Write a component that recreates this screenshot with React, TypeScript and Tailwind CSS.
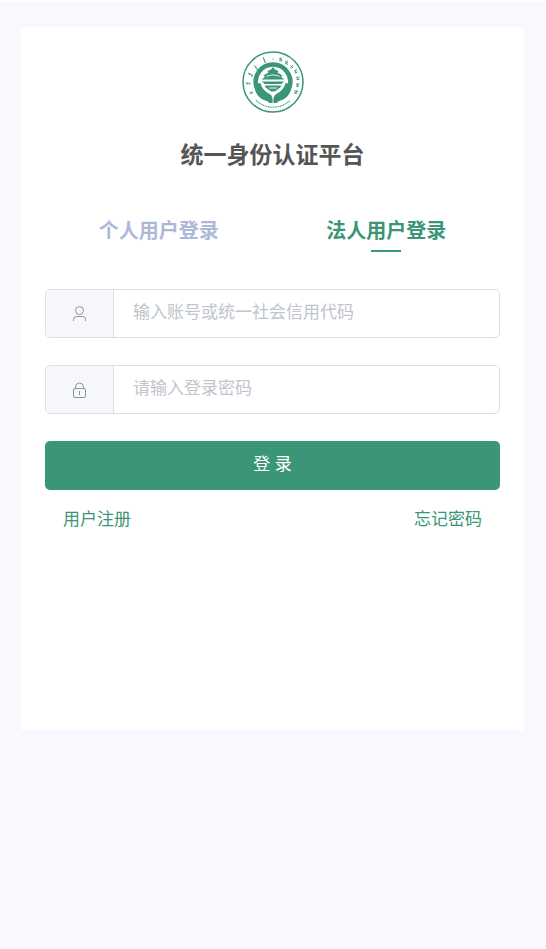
import { FormEvent, useState } from "react";

const TABS = ["个人用户登录", "法人用户登录"];

function Logo() {
  return (
    <svg
      viewBox="0 0 62 62"
      className="size-[62px]"
      fill="none"
      stroke="#3a9676"
      role="img"
      aria-label="logo"
    >
      <circle cx="31" cy="31" r="30" strokeWidth="1.5" />

      {/* script on the left side of the ring */}
      <path
        d="M7.500 42.500l3.500-1.500M8.500 40.500l1.500 2.500M3.500 32l5 .5M5 31.500l.5 2M7.500 32v1.500M6 22l5 3M8 22l-.5 2M10 23.500l-.5 2M12 14l4 5M13 17l1.500-1M14.500 19l1.500-1M21 6l2.500 6M21.500 9l1.500-.5M22.500 11l1.500-.5"
        strokeWidth=".9"
      />

      {/* characters on the right side of the ring */}
      <path
        d="M30.500 8h1.200M37 7.500l3 1M38.800 6.500l-1 4M39.800 8.500l-.5 2M43 10l3 2M45.500 9.500l-2.500 4M44 12.500l2 1M48.500 14.500l2.500 2.500M51 14l-3 3.500M52 20l3-1.500M52.500 22l3-1M53 19.500l1.500 2.500M54 26.500l3.500-.5M54.500 28.500h3M56 26v2.500M54 33h3.500M54 35h3M55.500 33v3M52.500 39.500l4 1M52 41.500l3.500 1M54.500 39.500l-1 3.500"
        strokeWidth=".9"
      />
      <path
        d="M14 49.500a25 25 0 0 0 34 0"
        strokeWidth="1.2"
        strokeDasharray="1 .7"
      />

      {/* arch over the hall */}
      <path
        d="M14.500 36a17.300 17.300 0 1 1 33 0"
        strokeWidth="4.500"
      />

      <g fill="#3a9676" stroke="none">
        {/* hall */}
        <path d="M31 16l2 2.500 3.500 1.500-1 1.500 5 3-1.500 1.500 3.500 2.500H19.500l3.500-2.500-1.500-1.500 5-3-1-1.500 3.500-1.500z" />
        <path d="M20 30.500h22l-2.500 2.500h-17zM22.500 34.500h17c-2 4-5 6-8.500 6s-6.500-2-8.500-6z" />

        {/* hands */}
        <path d="M12 33c.5 8 4 13.500 10 16 3 1.200 5 1.500 5 3h3.500c.5-5-.5-8-3.500-9.500-4-2-7-5-8.500-10.500z" />
        <path d="M50 33c-.5 8-4 13.500-10 16-3 1.200-5 1.500-5 3h-3.500c-.5-5 .5-8 3.500-9.500 4-2 7-5 8.500-10.500z" />
      </g>
      <path
        d="M17.500 27.500c1 5 3 8 6 10.500M20 33c2 3 5 5 8 7M44.500 27.500c-1 5-3 8-6 10.500M42 33c-2 3-5 5-8 7M24.500 25.500c2-1 4-1.500 6.500-1.500s4.500.5 6.500 1.500M27 37h8"
        stroke="#fff"
        strokeWidth=".9"
      />
    </svg>
  );
}

function UserIcon() {
  return (
    <svg viewBox="0 0 16 16" className="size-4" fill="none" stroke="#909399">
      <circle cx="7.500" cy="4.500" r="4" />
      <path d="M1.500 15v-1.500a3 3 0 0 1 3-3h6a3 3 0 0 1 3 3V15" />
    </svg>
  );
}

function LockIcon() {
  return (
    <svg viewBox="0 0 16 16" className="size-4" fill="none" stroke="#909399">
      <rect x="1.500" y="6.500" width="12" height="9" rx="1.500" />
      <path d="M3.500 6.500V5a4 4 0 0 1 8 0v1.500M7.500 9v4" />
    </svg>
  );
}

function App() {
  const [activeTab, setActiveTab] = useState(1);
  const [account, setAccount] = useState("");
  const [password, setPassword] = useState("");

  const login = (e: FormEvent) => {
    e.preventDefault();
  };

  return (
    <div className="min-h-screen border-t-2 border-white bg-[#f8f9fe] pt-[25px] pr-[22px] pl-[21px] font-['Liberation_Sans','Noto_Sans_CJK_SC',sans-serif]">
      <main className="min-h-[703px] bg-white px-6 pt-6">
        <div className="flex justify-center">
          <Logo />
        </div>
        <h1 className="mt-[26px] text-center text-[23px] leading-8 font-bold text-[#555]">
          统一身份认证平台
        </h1>

        <div className="mt-11 flex" role="tablist">
          {TABS.map((tab, index) => (
            <button
              key={tab}
              type="button"
              role="tab"
              aria-selected={index === activeTab}
              className={`flex flex-1 cursor-pointer flex-col items-center text-xl leading-8 font-bold ${
                index === activeTab ? "text-[#3a9676]" : "text-[#adb8d8]"
              }`}
              onClick={() => setActiveTab(index)}
            >
              {tab}
              {index === activeTab && (
                <span className="mt-[3px] h-0.5 w-[30px] bg-[#3a9676]" />
              )}
            </button>
          ))}
        </div>

        <form className="mt-[37px]" onSubmit={login}>
          <div className="flex h-[49px] overflow-hidden rounded-[5px] border border-[#dcdfe6]">
            <label
              htmlFor="account"
              aria-label="账号"
              className="flex w-[68px] items-center justify-center border-r border-[#dcdfe6] bg-[#f5f7fa]"
            >
              <UserIcon />
            </label>
            <input
              id="account"
              type="text"
              autoComplete="off"
              className="min-w-0 flex-1 px-[19px] pb-0.5 text-[17px] text-[#606266] outline-none placeholder:text-[#c0c4cc]"
              placeholder="输入账号或统一社会信用代码"
              value={account}
              onChange={(e) => setAccount(e.target.value)}
            />
          </div>
          <div className="mt-[27px] flex h-[49px] overflow-hidden rounded-[5px] border border-[#dcdfe6]">
            <label
              htmlFor="password"
              aria-label="密码"
              className="flex w-[68px] items-center justify-center border-r border-[#dcdfe6] bg-[#f5f7fa]"
            >
              <LockIcon />
            </label>
            <input
              id="password"
              type="password"
              className="min-w-0 flex-1 px-[19px] pb-0.5 text-[17px] text-[#606266] outline-none placeholder:text-[#c0c4cc]"
              placeholder="请输入登录密码"
              value={password}
              onChange={(e) => setPassword(e.target.value)}
            />
          </div>
          <button
            type="submit"
            className="mt-[27px] h-[49px] w-full cursor-pointer rounded-[5px] bg-[#3a9676] pb-0.5 text-[17px] text-white"
          >
            登 录
          </button>
        </form>

        <div className="mt-4 flex justify-between px-[18px] text-[17px] leading-7 text-[#3a9676]">
          <a href="#register">用户注册</a>
          <a href="#forgot">忘记密码</a>
        </div>
      </main>
    </div>
  );
}

export default App;
